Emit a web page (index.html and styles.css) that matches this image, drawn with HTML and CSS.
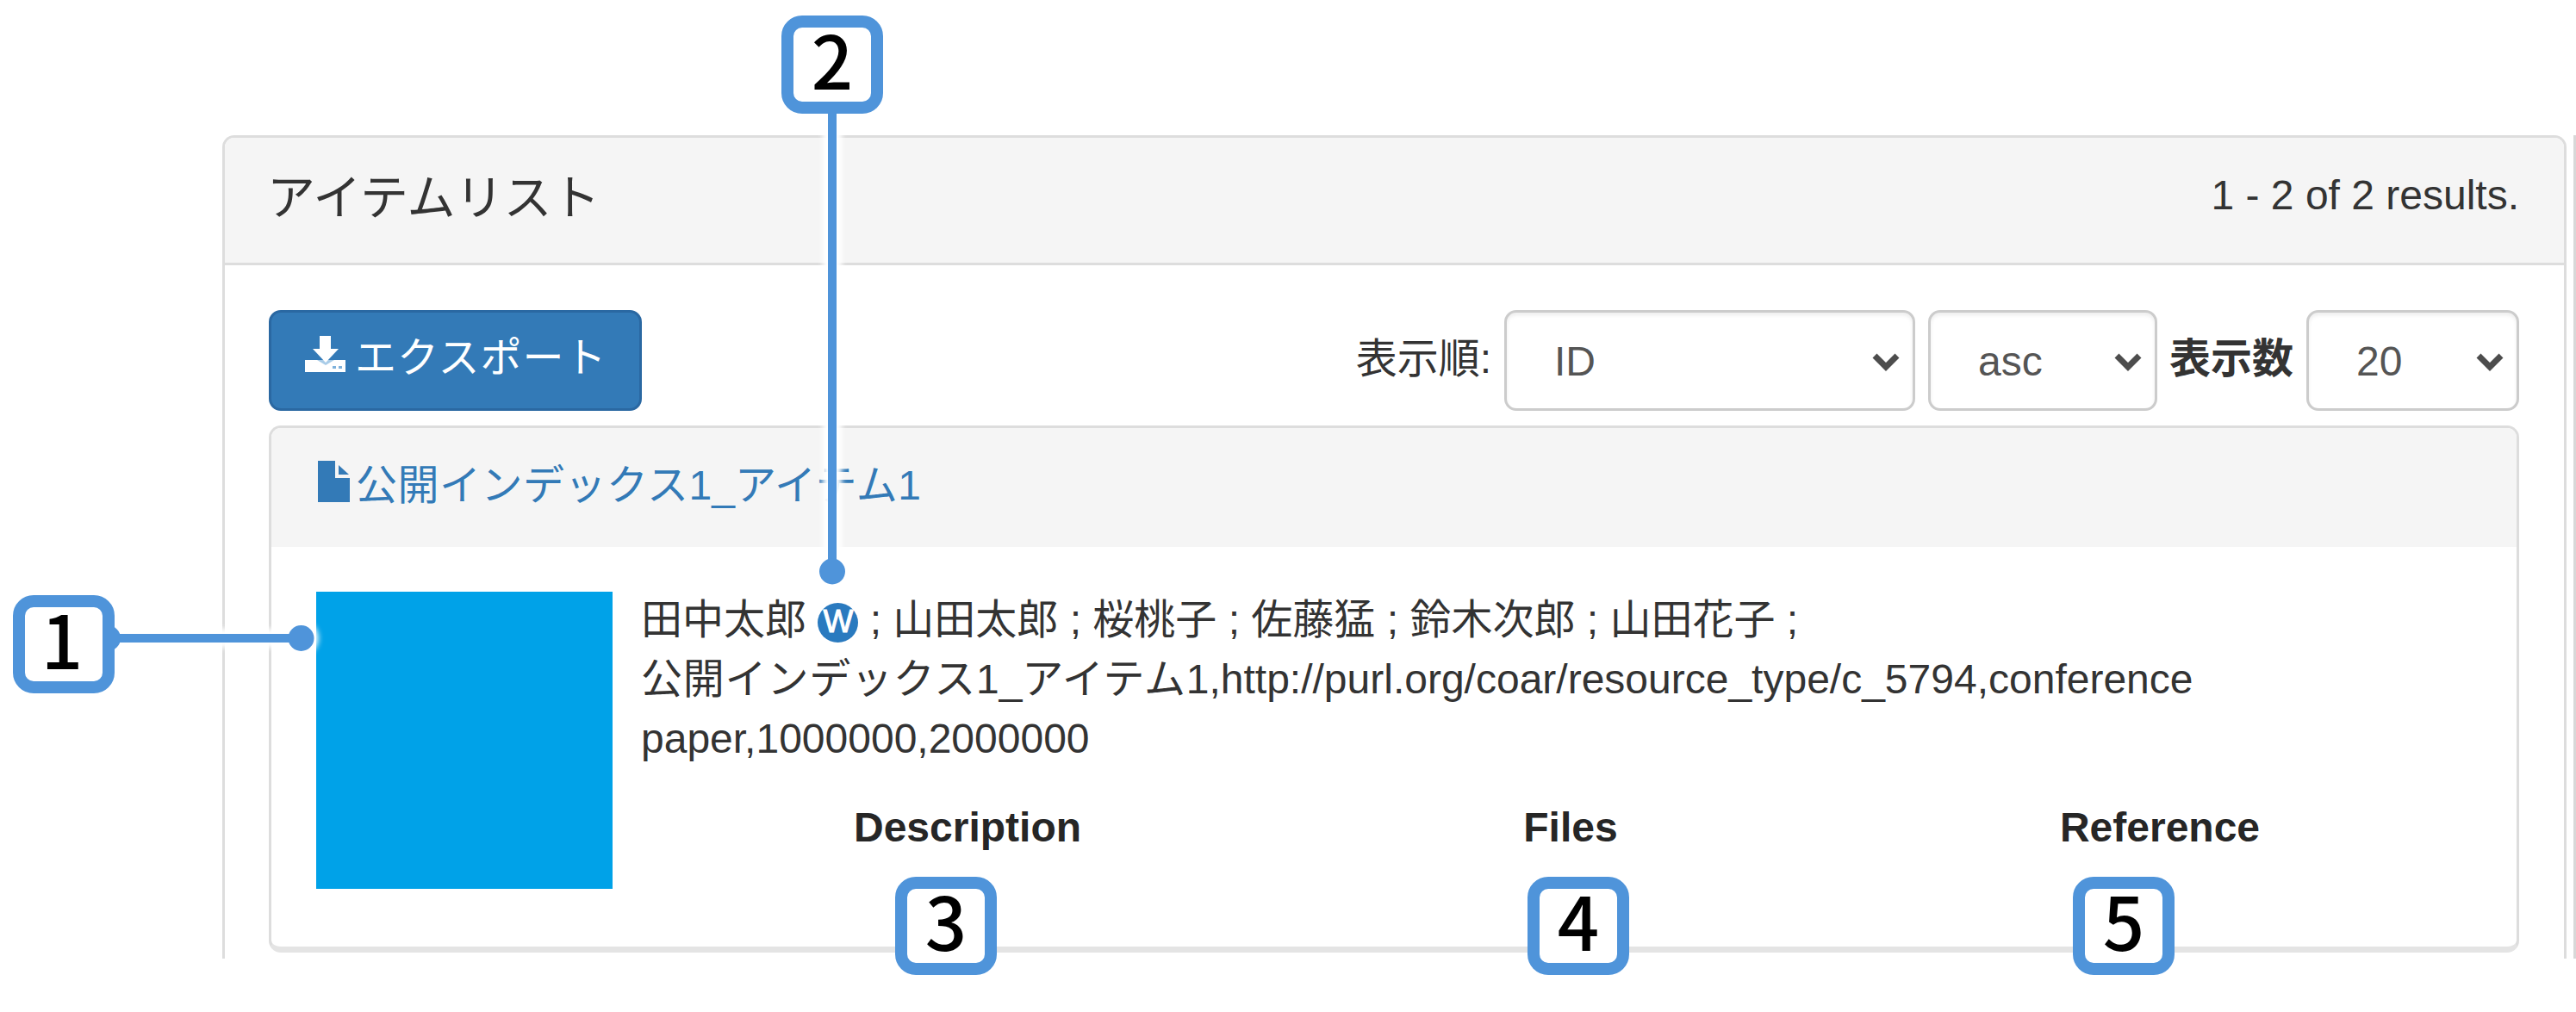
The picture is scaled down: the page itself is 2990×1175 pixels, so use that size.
FILE: index.html
```html
<!DOCTYPE html>
<html lang="ja">
<head>
<meta charset="utf-8">
<title>アイテムリスト</title>
<link rel="stylesheet" href="styles.css">
</head>
<body>
<main class="page">
  <section class="panel">
    <header class="panel-head">
      <h1 class="panel-title">アイテムリスト</h1>
      <p class="result-count">1 - 2 of 2 results.</p>
    </header>
    <div class="panel-body">
      <div class="toolbar">
        <button class="export" type="button">
          <svg class="export-icon" viewBox="0 0 47 44"><path d="M0 28h47v14H0z"/><path class="export-notch" d="M14 28l10 6 10-6z"/><path d="M17 0h13v15h9L24 31 9 15h8z"/><path class="export-dots" d="M32 35h4v3h-4zM39 35h4v3h-4z"/></svg>
          <span>エクスポート</span>
        </button>
        <div class="sorting">
          <span class="label">表示順:</span>
          <div class="select select-key"><span>ID</span><svg class="chevron" viewBox="0 0 32 21"><path d="M3 3l13 13L29 3"/></svg></div>
          <div class="select select-order"><span>asc</span><svg class="chevron" viewBox="0 0 32 21"><path d="M3 3l13 13L29 3"/></svg></div>
          <span class="label label-strong">表示数</span>
          <div class="select select-size"><span>20</span><svg class="chevron" viewBox="0 0 32 21"><path d="M3 3l13 13L29 3"/></svg></div>
        </div>
      </div>
      <article class="item">
        <header class="item-head">
          <svg class="file-icon" viewBox="0 0 37 48"><path d="M0 0h20v20h17v28H0z"/><path d="M24 5l12 11H24z"/></svg>
          <a class="item-link"><span class="kana">公開インデックス</span>1_<span class="kana">アイテム</span>1</a>
        </header>
        <div class="item-body">
          <div class="thumbnail"></div>
          <div class="details">
            <p class="authors">田中太郎 <span class="weko">W</span> ; 山田太郎 ; 桜桃子 ; 佐藤猛 ; 鈴木次郎 ; 山田花子 ;</p>
            <p class="summary"><span class="kana">公開インデックス</span>1_<span class="kana">アイテム</span>1,http://purl.org/coar/resource_type/c_5794,conference<br>paper,1000000,2000000</p>
            <div class="columns">
              <strong>Description</strong><strong>Files</strong><strong>Reference</strong>
            </div>
          </div>
        </div>
      </article>
    </div>
  </section>
  <div class="next-edge"></div>
</main>

<svg class="connectors" viewBox="0 0 2990 1175">
  <g class="halo"><path d="M125 741H349M966 120V663"/><circle cx="349.500" cy="741" r="15"/><circle cx="966" cy="663.500" r="15"/></g>
  <g class="line"><path d="M125 741H349M966 120V663"/><circle cx="125" cy="741" r="15"/><circle cx="349.500" cy="741" r="15"/><circle cx="966" cy="663.500" r="15"/></g>
</svg>
<div class="callout callout-1">1</div>
<div class="callout callout-2">2</div>
<div class="callout callout-3">3</div>
<div class="callout callout-4">4</div>
<div class="callout callout-5">5</div>
</body>
</html>
```
FILE: styles.css
```css
* { box-sizing: border-box; }
body {
  margin: 0;
  position: relative;
  width: 2990px;
  height: 1175px;
  overflow: hidden;
  background: #fff;
  color: #333;
  font-family: "Liberation Sans", "Noto Sans CJK JP", sans-serif;
  font-size: 48px;
  line-height: 69px;
}
h1, p { margin: 0; font-weight: 400; }
svg { display: block; }
.kana { letter-spacing: .8px; }
.item-link .kana { letter-spacing: .5px; }

.page {
  display: flex;
  justify-content: space-between;
  height: 1113px;
  padding: 157px 0 0 258px;
}
.panel {
  width: 2721px;
  border: 3px solid #ddd;
  border-bottom: 0;
  border-radius: 14px 14px 0 0;
}
.next-edge { width: 3px; background: #d8d8d8; }
.panel-head {
  display: flex;
  justify-content: space-between;
  height: 148px;
  padding: 32px 52px 0 49px;
  border-bottom: 3px solid #ddd;
  border-radius: 11px 11px 0 0;
  background: #f5f5f5;
}
.panel-title { padding-top: 3px; font-size: 56px; }
.panel-body { padding: 52px 52px 0 51px; }

.toolbar {
  display: flex;
  justify-content: space-between;
  height: 117px;
  margin-bottom: 17px;
}
.export {
  display: flex;
  gap: 11px;
  width: 433px;
  padding: 18px 0 0 39px;
  border: 3px solid #2a68a2;
  border-radius: 14px;
  background: #337ab7;
  color: #fff;
  font: inherit;
  letter-spacing: 1px;
}
.export-icon { width: 47px; height: 44px; margin-top: 9px; fill: #fff; }
.export-icon .export-dots { fill: #7fb2dc; }
.export-icon .export-notch { fill: #a9cce8; }
.sorting { display: flex; }
.label { padding-top: 22px; margin-right: 15px; }
.label-strong { font-weight: 700; margin-right: 15px; }
.select {
  display: flex;
  justify-content: space-between;
  padding: 22px 15px 0 55px;
  border: 3px solid #ccc;
  border-radius: 14px;
  box-shadow: inset 0 3px 4px rgba(0, 0, 0, .07);
  color: #555;
}
.select-key { width: 477px; margin-right: 15px; }
.select-order { width: 266px; margin-right: 14px; }
.select-size { width: 247px; }
.chevron {
  width: 32px;
  height: 21px;
  margin-top: 25px;
  fill: none;
  stroke: #4d4d4d;
  stroke-width: 7;
}

.item {
  height: 612px;
  border: 3px solid #ddd;
  border-bottom: 7px solid #e4e4e4;
  border-radius: 14px;
}
.item-head {
  display: flex;
  gap: 7px;
  height: 138px;
  padding: 32px 0 0 54px;
  border-radius: 11px 11px 0 0;
  background: #f5f5f5;
  color: #337ab7;
}
.file-icon { width: 37px; height: 48px; margin-top: 6px; fill: #337ab7; }
.item-body { display: flex; gap: 33px; padding: 50px 51px 0 52px; }
.thumbnail { width: 344px; height: 345px; margin-top: 2px; background: #00a2e8; }
.details { flex: 1; white-space: nowrap; }
.weko {
  display: inline-block;
  width: 47px;
  height: 46px;
  border-radius: 50%;
  background: #2a7abf;
  color: #fff;
  font-size: 37px;
  line-height: 43px;
  text-align: center;
  -webkit-text-stroke: 1px #fff;
  vertical-align: -10px;
  position: relative;
  top: -12px;
}
.authors { height: 69px; }
.columns {
  display: grid;
  grid-template-columns: 758fr 642fr 726fr;
  margin-top: 34px;
  text-align: center;
}
.columns strong { color: #262626; }

.connectors { position: absolute; inset: 0; width: 2990px; height: 1175px; }
.line { fill: #4f94da; stroke-width: 0; }
.line path { stroke: #4f94da; stroke-width: 10; }
.halo { fill: #fff; stroke: #fff; stroke-width: 10; filter: blur(3px); }
.halo path { stroke-width: 22; }
.callout {
  position: absolute;
  width: 118px;
  height: 114px;
  border: 14px solid #4f94da;
  border-radius: 24px;
  background: #fff;
  color: #000;
  font-family: "Noto Sans CJK JP", sans-serif;
  font-size: 85px;
  font-weight: 500;
  line-height: 69px;
  text-align: center;
}
.callout-1 { left: 15px; top: 691px; padding-right: 4px; }
.callout-2 { left: 907px; top: 18px; }
.callout-3 { left: 1039px; top: 1018px; }
.callout-4 { left: 1773px; top: 1018px; }
.callout-5 { left: 2406px; top: 1018px; }
```
